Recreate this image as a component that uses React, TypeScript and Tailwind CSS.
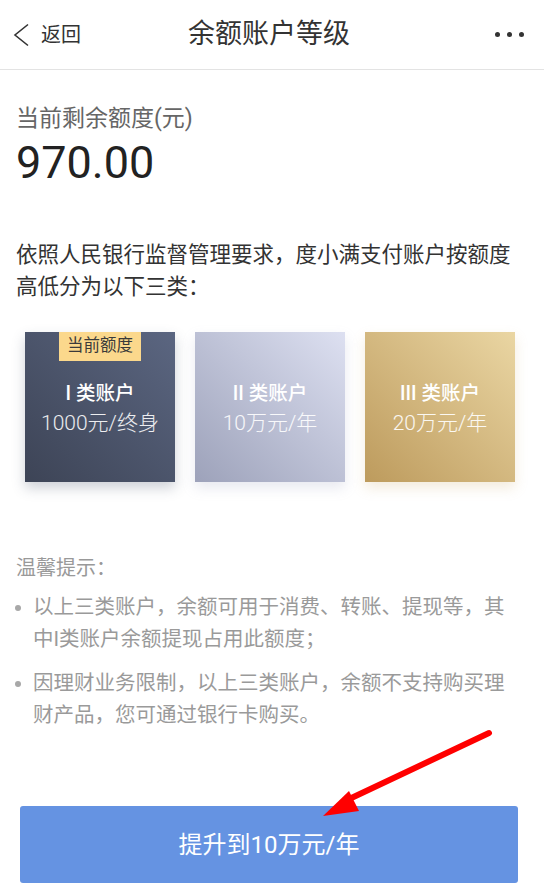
const tiers = [
  {
    name: "I 类账户",
    limit: "1000元/终身",
    current: true,
    bg: "bg-gradient-to-tr from-[#3d4456] to-[#5b6681]",
    shadow: "shadow-[0_6px_12px_rgba(60,70,95,0.25)]",
  },
  {
    name: "II 类账户",
    limit: "10万元/年",
    current: false,
    bg: "bg-gradient-to-tr from-[#9da2ba] to-[#dde0f1]",
    shadow: "shadow-[0_6px_12px_rgba(150,155,185,0.22)]",
  },
  {
    name: "III 类账户",
    limit: "20万元/年",
    current: false,
    bg: "bg-gradient-to-tr from-[#bd9b5d] to-[#ead6a3]",
    shadow: "shadow-[0_6px_12px_rgba(200,165,100,0.22)]",
  },
];

const tips = [
  "以上三类账户，余额可用于消费、转账、提现等，其中I类账户余额提现占用此额度；",
  "因理财业务限制，以上三类账户，余额不支持购买理财产品，您可通过银行卡购买。",
];

export default function App() {
  return (
    <div className="relative min-h-[891px] w-[544px] bg-white font-['Roboto','Noto_Sans_CJK_SC',sans-serif] overflow-hidden">
      <header className="grid h-[70px] grid-cols-[1fr_auto_1fr] items-center border-b border-[#e3e3e3]">
        <div className="flex items-center pl-[13px] text-[#333]">
          <svg width="17" height="24" viewBox="0 0 17 24" fill="none">
            <polyline points="15,1.5 2,12 15,22.5" stroke="#333" strokeWidth="1.6" strokeLinejoin="miter" />
          </svg>
          <span className="ml-[11px] text-[20px]">返回</span>
        </div>
        <h1 className="-ml-[6px] text-[27px] text-[#333]">余额账户等级</h1>
        <div className="flex items-center justify-end gap-[7px] pr-[20px]">
          <span className="h-[5px] w-[5px] rounded-full bg-[#333]" />
          <span className="h-[5px] w-[5px] rounded-full bg-[#333]" />
          <span className="h-[5px] w-[5px] rounded-full bg-[#333]" />
        </div>
      </header>

      <section className="px-[16px] pt-[34px]">
        <div className="text-[23px] leading-[30px] text-[#666]">当前剩余额度(元)</div>
        <div className="mt-[4px] text-[45px] leading-[50px] text-[#222]">970.00</div>
        <p className="mt-[51px] text-[21.5px] leading-[32px] text-[#333]">
          依照人民银行监督管理要求，度小满支付账户按额度高低分为以下三类：
        </p>
      </section>

      <section className="flex gap-[20px] pl-[25px] pt-[29px]">
        {tiers.map((t) => (
          <div
            key={t.name}
            className={`flex h-[150px] w-[150px] flex-col items-center ${t.bg} ${t.shadow}`}
          >
            <div className="h-[29px]">
              {t.current && (
                <div className="flex h-[29px] w-[82px] items-center justify-center bg-[#fbd88c] text-[16.5px] text-[#3a3a3a]">
                  当前额度
                </div>
              )}
            </div>
            <div className="mt-[20px] text-[19.5px] font-medium leading-[26px] text-white">{t.name}</div>
            <div className="mt-[2px] text-[21px] font-light leading-[28px] text-white/90">{t.limit}</div>
          </div>
        ))}
      </section>

      <section className="pl-[16px] pr-[30px] pt-[72px]">
        <div className="text-[20px] leading-[28px] text-[#999]">温馨提示：</div>
        <ul className="mt-[9px] flex flex-col gap-[12px]">
          {tips.map((tip) => (
            <li key={tip} className="flex text-[20.5px] leading-[32px] text-[#9a9a9a]">
              <span className="-ml-[1px] mr-[12px] mt-[14px] h-[6px] w-[6px] shrink-0 rounded-full bg-[#a8a8a8]" />
              <span>{tip}</span>
            </li>
          ))}
        </ul>
      </section>

      <div className="px-[20px] pt-[75px]">
        <button className="flex h-[77px] w-[498px] items-center justify-center rounded-[3px] bg-[#6593e2] text-[24px] text-white">
          提升到10万元/年
        </button>
      </div>

      {/* red annotation arrow pointing at the button */}
      <svg className="absolute left-0 top-0" width="544" height="891" viewBox="0 0 544 891">
        <line x1="489" y1="733" x2="345" y2="801" stroke="#ff0000" strokeWidth="6" strokeLinecap="round" />
        <polygon points="323,816 349,791 359,811" fill="#ff0000" />
      </svg>
    </div>
  );
}
